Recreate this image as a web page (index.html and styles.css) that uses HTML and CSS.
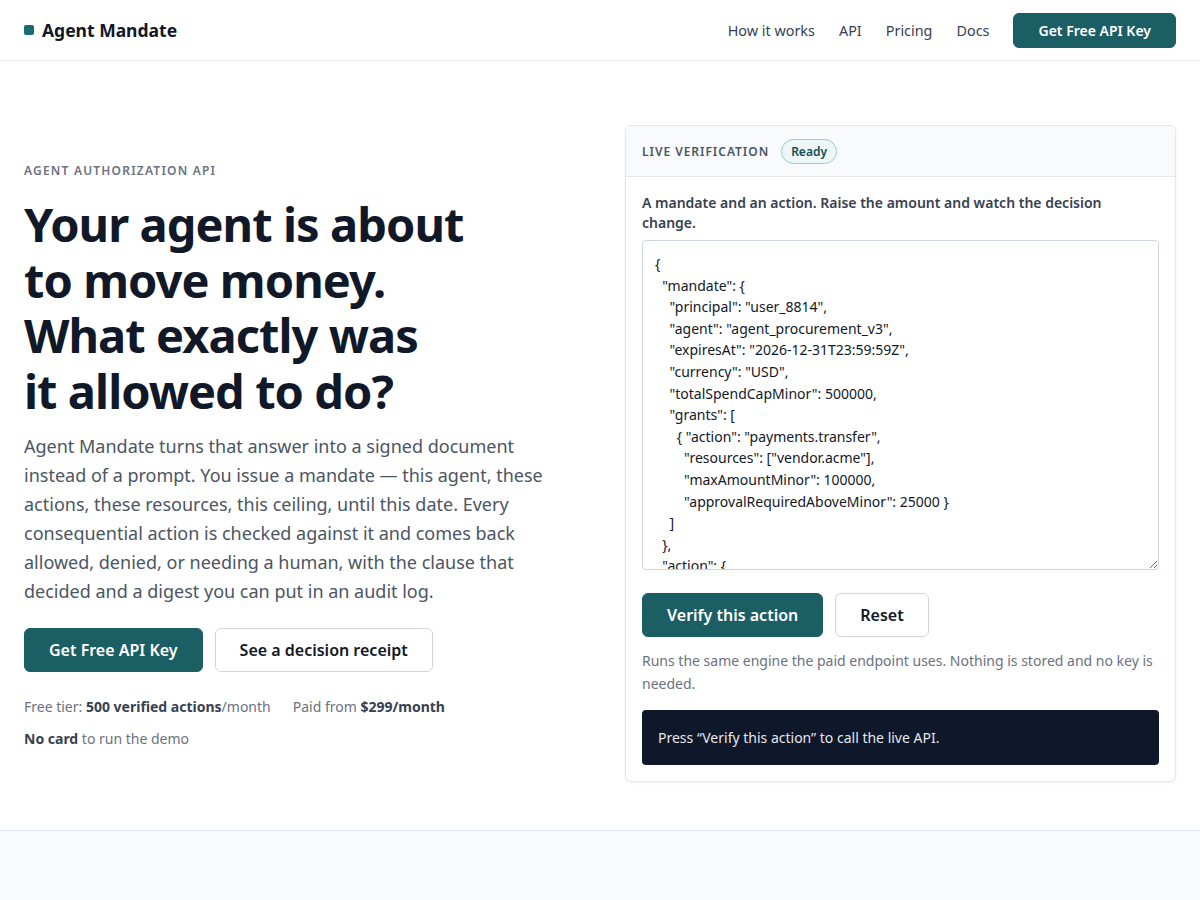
FILE: index.html
```html
<!DOCTYPE html>
<html lang="en">
<head>
<meta charset="utf-8">
<title>Agent Mandate</title>
<link rel="stylesheet" href="styles.css">
</head>
<body>
<header class="site-header">
  <div class="brand"><span class="brand-mark"></span><span class="brand-name">Agent Mandate</span></div>
  <nav class="nav">
    <a class="nav-link" href="#">How it works</a>
    <a class="nav-link" href="#">API</a>
    <a class="nav-link" href="#">Pricing</a>
    <a class="nav-link" href="#">Docs</a>
    <a class="btn btn-primary btn-sm" href="#">Get Free API Key</a>
  </nav>
</header>

<main class="hero">
  <section class="hero-copy">
    <p class="eyebrow">AGENT AUTHORIZATION API</p>
    <h1 class="headline">Your agent is about<br>to move money.<br>What exactly was<br>it allowed to do?</h1>
    <p class="lede">Agent Mandate turns that answer into a signed document instead of a prompt. You issue a mandate — this agent, these actions, these resources, this ceiling, until this date. Every consequential action is checked against it and comes back allowed, denied, or needing a human, with the clause that decided and a digest you can put in an audit log.</p>
    <div class="cta-row">
      <a class="btn btn-primary" href="#">Get Free API Key</a>
      <a class="btn btn-outline" href="#">See a decision receipt</a>
    </div>
    <div class="meta">
      <span>Free tier: <strong>500 verified actions</strong>/month</span>
      <span>Paid from <strong>$299/month</strong></span>
      <span><strong>No card</strong> to run the demo</span>
    </div>
  </section>

  <section class="card">
    <div class="card-head">
      <span class="card-title">LIVE VERIFICATION</span>
      <span class="badge">Ready</span>
    </div>
    <div class="card-body">
      <p class="card-intro">A mandate and an action. Raise the amount and watch the decision change.</p>
      <textarea class="code" spellcheck="false">{
  "mandate": {
    "principal": "user_8814",
    "agent": "agent_procurement_v3",
    "expiresAt": "2026-12-31T23:59:59Z",
    "currency": "USD",
    "totalSpendCapMinor": 500000,
    "grants": [
      { "action": "payments.transfer",
        "resources": ["vendor.acme"],
        "maxAmountMinor": 100000,
        "approvalRequiredAboveMinor": 25000 }
    ]
  },
  "action": {
    "type": "payments.transfer",
    "resource": "vendor.acme",
    "amountMinor": 20000
  }
}</textarea>
      <div class="card-actions">
        <button class="btn btn-primary" type="button">Verify this action</button>
        <button class="btn btn-outline" type="button">Reset</button>
      </div>
      <p class="note">Runs the same engine the paid endpoint uses. Nothing is stored and no key is needed.</p>
      <div class="result">Press “Verify this action” to call the live API.</div>
    </div>
  </section>
</main>

<section class="band"></section>
</body>
</html>
```

FILE: styles.css
```css
* { box-sizing: border-box; }

html, body { margin: 0; padding: 0; }

body {
  font-family: "Noto Sans", "DejaVu Sans", sans-serif;
  color: #111827;
  background: #ffffff;
}

a { text-decoration: none; color: inherit; }

.site-header {
  height: 61px;
  display: flex;
  align-items: center;
  justify-content: space-between;
  padding: 0 24px;
  border-bottom: 1px solid #e5e7eb;
}

.brand { display: flex; align-items: center; gap: 8px; }

.brand-mark {
  width: 10px;
  height: 10px;
  border-radius: 2px;
  background: #1b6b72;
}

.brand-name {
  font-size: 17.5px;
  font-weight: 700;
  color: #111827;
}

.nav { display: flex; align-items: center; gap: 24px; }

.nav-link {
  font-size: 14.4px;
  color: #374151;
}

.btn {
  display: inline-flex;
  align-items: center;
  justify-content: center;
  height: 44px;
  padding: 0 24px;
  border-radius: 6px;
  font-family: inherit;
  font-size: 16px;
  font-weight: 600;
  border: 1px solid transparent;
  cursor: pointer;
}

.btn-primary {
  background: #1b5e64;
  color: #ffffff;
  border-color: #1b5e64;
}

.btn-outline {
  background: #ffffff;
  color: #111827;
  border-color: #d1d5db;
}

.btn-sm {
  height: 35px;
  padding: 0 24px;
  font-size: 14px;
}

.hero {
  display: grid;
  grid-template-columns: 1fr 551px;
  gap: 48px;
  align-items: center;
  padding: 64px 24px 48px;
  border-bottom: 1px solid #e2e8f0;
}

.hero-copy { padding-top: 4px; }

.eyebrow {
  margin: 0 0 18px;
  font-size: 12px;
  font-weight: 600;
  letter-spacing: 0.1em;
  color: #6b7280;
}

.headline {
  margin: 0 0 13px;
  font-size: 47px;
  line-height: 55.5px;
  font-weight: 700;
  letter-spacing: -0.02em;
  color: #111827;
}

.lede {
  margin: 0 0 22px;
  font-size: 18px;
  line-height: 29px;
  color: #4b5563;
}

.cta-row { display: flex; gap: 12px; margin-bottom: 24px; }

.meta {
  display: flex;
  flex-wrap: wrap;
  column-gap: 22px;
  row-gap: 11px;
  max-width: 460px;
  font-size: 14px;
  line-height: 21px;
  color: #6b7280;
}

.meta strong { color: #374151; font-weight: 700; }

.card {
  border: 1px solid #e5e7eb;
  border-radius: 6px;
  background: #ffffff;
  box-shadow: 0 1px 3px rgba(15, 23, 42, 0.06);
  overflow: hidden;
}

.card-head {
  display: flex;
  align-items: center;
  gap: 12px;
  height: 51px;
  padding: 0 16px;
  background: #f8fafc;
  border-bottom: 1px solid #e5e7eb;
}

.card-title {
  font-size: 12px;
  font-weight: 600;
  letter-spacing: 0.08em;
  color: #4b5563;
}

.badge {
  display: inline-flex;
  align-items: center;
  height: 25px;
  padding: 0 9px;
  border-radius: 999px;
  border: 1px solid #9ec9c9;
  background: #eef7f7;
  color: #134e52;
  font-size: 12px;
  font-weight: 600;
}

.card-body { padding: 16px 16px 16px; }

.card-intro {
  margin: 0 0 7px;
  font-size: 14px;
  line-height: 20px;
  font-weight: 600;
  color: #374151;
}

.code {
  display: block;
  width: 100%;
  height: 330px;
  margin: 0 0 23px;
  padding: 12px;
  border: 1px solid #cbd5e1;
  border-radius: 4px;
  font-family: "Noto Sans", "DejaVu Sans", sans-serif;
  font-size: 14px;
  line-height: 21.6px;
  color: #111827;
  background: #ffffff;
  resize: vertical;
  white-space: pre;
  overflow: hidden;
}

.card-actions { display: flex; gap: 12px; margin-bottom: 12px; }

.note {
  margin: 0 0 15px;
  font-size: 14px;
  line-height: 23px;
  color: #6b7280;
}

.result {
  padding: 16px;
  border-radius: 4px;
  background: #0f172a;
  color: #e5e7eb;
  font-size: 14px;
  line-height: 23px;
}

.band {
  height: 70px;
  background: #f8fafc;
}
```
